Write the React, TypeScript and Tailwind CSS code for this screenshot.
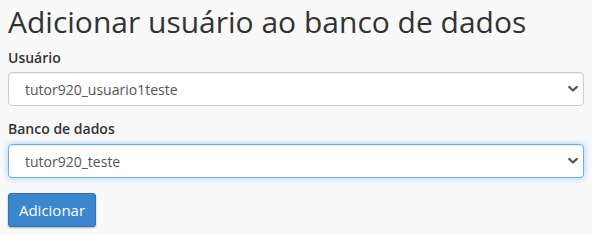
import React from "react";

function Chevron() {
  return (
    <svg
      className="pointer-events-none absolute right-[6px] top-1/2 -translate-y-1/2"
      width="10"
      height="7"
      viewBox="0 0 10 7"
      fill="none"
    >
      <path d="M1.2 1.4 L5 5 L8.8 1.4" stroke="#555" strokeWidth="2.2" strokeLinecap="round" strokeLinejoin="round" />
    </svg>
  );
}

function Select({ value, focused }: { value: string; focused?: boolean }) {
  return (
    <div className="relative">
      <select
        defaultValue={value}
        className={
          "block h-[34px] w-full appearance-none rounded-[4px] border bg-white pl-[16px] pr-8 text-[14px] text-[#555] outline-none " +
          (focused
            ? "border-[#66afe9] shadow-[inset_0_1px_1px_rgba(0,0,0,0.075),0_0_6px_rgba(102,175,233,0.6)]"
            : "border-[#ccc] shadow-[inset_0_1px_1px_rgba(0,0,0,0.075)]")
        }
        style={{ fontFamily: '"Open Sans", sans-serif' }}
      >
        <option value={value}>{value}</option>
      </select>
      <Chevron />
    </div>
  );
}

export default function App() {
  return (
    <div
      className="h-[235px] w-[592px] overflow-hidden bg-[#f9f9f9] px-[8px] text-[#333]"
      style={{ fontFamily: '"Open Sans", sans-serif' }}
    >
      <h1 className="mb-[10px] pt-[5px] text-[30px] leading-[33px] font-normal text-[#333]">
        Adicionar usuário ao banco de dados
      </h1>
      <div className="flex flex-col">
        <label className="mb-[4px] text-[14px] leading-[20px] font-semibold">Usuário</label>
        <Select value="tutor920_usuario1teste" />
        <label className="mb-[5px] mt-[13px] text-[14px] leading-[20px] font-semibold">Banco de dados</label>
        <Select value="tutor920_teste" focused />
        <div className="mt-[15px]">
          <button className="h-[34px] w-[88px] rounded-[3px] border border-[#2f73b3] bg-[#3a87cd] text-[15px] text-white shadow-[0_1px_2px_rgba(0,0,0,0.3)]">
            Adicionar
          </button>
        </div>
      </div>
    </div>
  );
}
